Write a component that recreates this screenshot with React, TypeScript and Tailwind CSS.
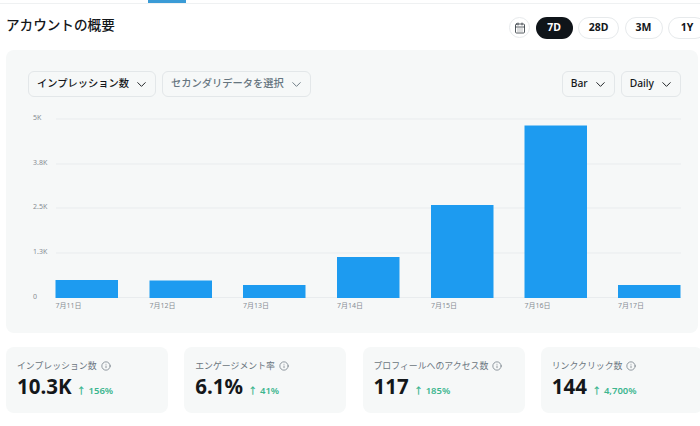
import { CalendarDays, ChevronDown, Info } from "lucide-react";

const ranges = ["28D", "3M", "1Y"];

const ticks = [
  { label: "5K", y: 119 },
  { label: "3.8K", y: 164 },
  { label: "2.5K", y: 208 },
  { label: "1.3K", y: 253 },
  { label: "0", y: 297.5 },
];

const bars = [
  { day: "7月11日", x: 55.5, top: 280 },
  { day: "7月12日", x: 149.5, top: 280.5 },
  { day: "7月13日", x: 243, top: 285 },
  { day: "7月14日", x: 337, top: 257 },
  { day: "7月15日", x: 431, top: 205 },
  { day: "7月16日", x: 524.5, top: 125.5 },
  { day: "7月17日", x: 618, top: 285 },
];

const stats = [
  { label: "インプレッション数", value: "10.3K", change: "156%" },
  { label: "エンゲージメント率", value: "6.1%", change: "41%" },
  { label: "プロフィールへのアクセス数", value: "117", change: "185%" },
  { label: "リンククリック数", value: "144", change: "4,700%" },
];

function Select({ label, muted = false }: { label: string; muted?: boolean }) {
  return (
    <div
      className={`flex h-[26px] items-center gap-[5px] rounded-md border border-[#e3e7e9] pr-[6px] pl-2 text-[10.25px] font-medium ${
        muted ? "text-[#66757f]" : "text-[#14171a]"
      }`}
    >
      {label}
      <ChevronDown className="size-[15px]" strokeWidth={1.5} />
    </div>
  );
}

function Chart() {
  return (
    <svg width={700} height={210} viewBox="0 100 700 210" className="-ml-[6px] mt-[3px] block">
      {ticks.map((t) => (
        <g key={t.label}>
          <line x1={56} x2={681} y1={t.y} y2={t.y} stroke="#e9ecee" />
          <text x={33} y={t.y + 1} fontSize={7} fill="#868d93">
            {t.label}
          </text>
        </g>
      ))}
      {bars.map((b) => (
        <g key={b.day}>
          <rect x={b.x} y={b.top} width={62.5} height={298 - b.top} fill="#1d9bf0" />
          <text x={b.x} y={308} fontSize={7} fill="#868d93">
            {b.day}
          </text>
        </g>
      ))}
    </svg>
  );
}

export default function App() {
  return (
    <div
      className="h-[426px] w-[700px] overflow-hidden bg-white"
      style={{ fontFamily: '"Noto Sans", "Noto Sans CJK JP", sans-serif' }}
    >
      <div className="h-1 border-b border-[#eff1f2]">
        <div className="ml-[148px] h-[3px] w-[38px] bg-[#3a9bd6]" />
      </div>

      <div className="flex h-[46px] items-center justify-between pl-[6px]">
        <h1 className="-mt-[4px] text-[13.6px] font-medium text-[#14171a]">アカウントの概要</h1>
        <div className="mt-[1px] flex w-[191px] shrink-0 items-center gap-[5.5px] text-[10.5px] font-bold">
          <div className="flex size-[21px] shrink-0 items-center justify-center rounded-full border border-[#e7eaec] text-[#3c4449]">
            <CalendarDays className="size-3" strokeWidth={1.75} />
          </div>
          <div className="flex h-[22px] w-[37px] shrink-0 items-center justify-center rounded-full bg-[#0f1419] text-white">
            7D
          </div>
          {ranges.map((r) => (
            <div
              key={r}
              className={`flex h-[22px] shrink-0 items-center justify-center rounded-full border border-[#e7eaec] text-[#14171a] ${
                r === "28D" ? "w-[41px]" : "w-[38px]"
              }`}
            >
              {r}
            </div>
          ))}
        </div>
      </div>

      <div className="ml-[6px] h-[283px] w-[692px] rounded-lg bg-[#f6f8f8] pt-[21px]">
        <div className="flex justify-between pl-[22px] pr-[17px]">
          <div className="flex gap-[6px]">
            <Select label="インプレッション数" />
            <Select label="セカンダリデータを選択" muted />
          </div>
          <div className="flex gap-[6px]">
            <Select label="Bar" />
            <Select label="Daily" />
          </div>
        </div>
        <Chart />
      </div>

      <div className="ml-[6px] mt-[14px] flex gap-[16.25px]">
        {stats.map((s) => (
          <div key={s.label} className="h-[66px] w-[162px] shrink-0 rounded-lg bg-[#f6f8f8] px-[11px] pt-[11px]">
            <div className="flex items-center gap-1 text-[8.9px] leading-[15px] whitespace-nowrap text-[#6b7680]">
              {s.label}
              <Info className="size-[10px]" strokeWidth={1.75} />
            </div>
            <div className="flex items-baseline gap-[5px]">
              <span className="text-[20.5px] leading-[27px] font-bold text-[#14171a]">{s.value}</span>
              <span className="text-[9.5px] font-semibold text-[#3cb68f]">↑ {s.change}</span>
            </div>
          </div>
        ))}
      </div>
    </div>
  );
}
